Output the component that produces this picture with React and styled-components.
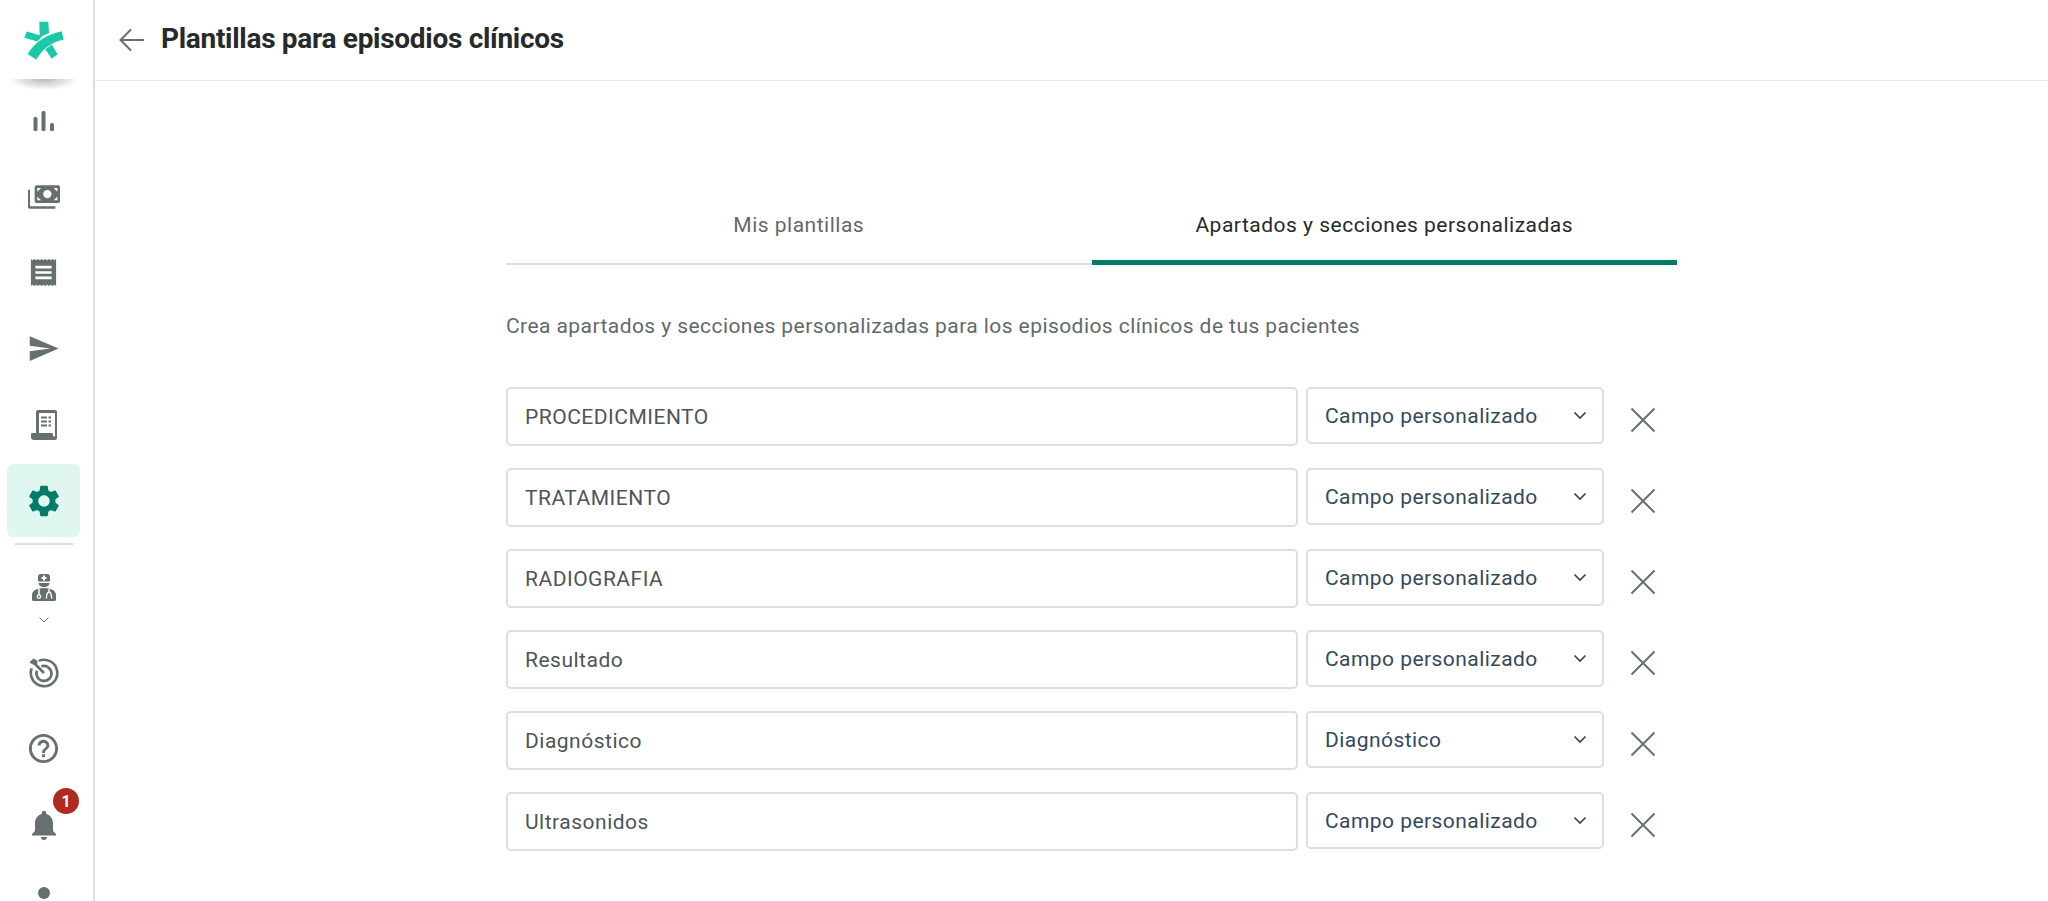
import styled, { createGlobalStyle } from 'styled-components';
import { MdSend, MdSettings, MdHelpOutline, MdNotifications } from 'react-icons/md';

const rows = [
  { name: 'PROCEDICMIENTO', type: 'Campo personalizado' },
  { name: 'TRATAMIENTO', type: 'Campo personalizado' },
  { name: 'RADIOGRAFIA', type: 'Campo personalizado' },
  { name: 'Resultado', type: 'Campo personalizado' },
  { name: 'Diagnóstico', type: 'Diagnóstico' },
  { name: 'Ultrasonidos', type: 'Campo personalizado' },
];

const Logo = () => (
  <svg width="40" height="39" viewBox="72 66 120 116" fill="#1cc8a8">
    <path d="M118 68h27l2 34c-10 3-18 7-25 12l-3-1z" />
    <path d="M73 116l7-19 42 12 1 7-11 11z" />
    <path d="M83 165C103 129 140 106 185 96l6 25C157 129 130 146 109 181z" />
    <path d="M136 150l19-14 18 29-18 14z" />
  </svg>
);

const ChartIcon = () => (
  <svg width="22" height="20" viewBox="0 0 22 20" fill="currentColor">
    <rect x="0.500" y="6" width="4" height="14" rx="1.500" />
    <rect x="8.500" y="0" width="4" height="20" rx="1.500" />
    <rect x="17" y="12" width="4" height="8" rx="1.500" />
  </svg>
);

const MoneyIcon = () => (
  <svg width="32" height="24" viewBox="0 0 96 70" fill="currentColor">
    <path
      fillRule="evenodd"
      d="M25 0h66a5 5 0 0 1 5 5v43a5 5 0 0 1-5 5H25a5 5 0 0 1-5-5V5a5 5 0 0 1 5-5zM28 8v11l11-11zM88 8H77l11 11zM28 45h11L28 34zM88 45V34L77 45zM58 14a12.500 12.500 0 1 0 0 25 12.500 12.500 0 0 0 0-25z"
    />
    <path d="M0 13h6v50h76v7H5a5 5 0 0 1-5-5z" />
  </svg>
);

const ReceiptIcon = () => (
  <svg width="27" height="29" viewBox="0 0 30 32">
    <path
      fill="currentColor"
      fillRule="evenodd"
      d="M1 1l2 1.500L5 1l2 1.500L9 1l2 1.500L13 1l2 1.500L17 1l2 1.500L21 1l2 1.500L25 1l2 1.500L29 1v30l-2-1.500-2 1.500-2-1.500-2 1.500-2-1.500-2 1.500-2-1.500-2 1.500-2-1.500-2 1.500-2-1.500-2 1.500-2-1.500-2 1.500zM6 8.500v3h18v-3zM6 14.500v3h18v-3zM6 20.500v3h18v-3z"
    />
  </svg>
);

const LedgerIcon = () => (
  <svg width="26" height="30" viewBox="0 0 26 30">
    <path
      fill="currentColor"
      fillRule="evenodd"
      d="M7 0h17a2 2 0 0 1 2 2v26a2 2 0 0 1-2 2H3a3 3 0 0 1-3-3v-3a1 1 0 0 1 1-1h4V2a2 2 0 0 1 2-2zM8 3v20h13.500l1 3.500H24V3zM10 6.500h6v2h-6zM17.500 6.500H20v2h-2.500zM10 10.500h6v2h-6zM17.500 10.500H20v2h-2.500zM10 14.500h6v2h-6zM17.500 14.500H20v2h-2.500z"
    />
  </svg>
);

const DoctorIcon = () => (
  <svg width="24" height="27" viewBox="0 0 24 27" fill="currentColor">
    <path
      fillRule="evenodd"
      d="M6 2.500A2.500 2.500 0 0 1 8.500 0h7A2.500 2.500 0 0 1 18 2.500v5H6zM11 1.500V3H9.500v2H11v1.500h2V5h1.500V3H13V1.500z"
    />
    <path d="M6.500 9h11c0 2.500-2.500 4-5.500 4s-5.500-1.500-5.500-4z" />
    <path d="M7 14.500c3-.8 7-.8 10 0 4 1 7 3 7 6.500v4.500a1.500 1.500 0 0 1-1.500 1.500h-21A1.500 1.500 0 0 1 0 25.500V21c0-3.500 3-5.500 7-6.500z" />
    <path d="M7 14.500v6.500" stroke="#fff" strokeWidth="1.500" fill="none" />
    <circle cx="7" cy="22.500" r="1.700" fill="none" stroke="#fff" strokeWidth="1.300" />
    <path d="M17 14.500v3.500c-1.800.5-2.600 3-2.600 6.500M17 18c1.800.5 2.600 3 2.600 6.500" stroke="#fff" strokeWidth="1.400" fill="none" />
  </svg>
);

const TargetIcon = () => (
  <svg width="30" height="30" viewBox="0 0 34 34" fill="none" stroke="currentColor" strokeWidth="3">
    <path d="M11 3.300a15 15 0 1 1-8 8.500" />
    <path d="M14 9.500a8.500 8.500 0 1 1-5 5" />
    <path d="M6 6l11 11" />
    <path d="M1 5l4-4 4 2v4H5z" fill="currentColor" strokeWidth="1" />
  </svg>
);

const GlobalStyle = createGlobalStyle`
  html, body {
    margin: 0;
    height: 100%;
    overflow: hidden;
    background: #ffffff;
  }
  body {
    font-family: Roboto, "Noto Sans", sans-serif;
  }
`;

const Page = styled.div`
  display: flex;
  width: 2048px;
  height: 901px;
  overflow: hidden;
`;

const Sidebar = styled.nav`
  flex: none;
  box-sizing: border-box;
  width: 95px;
  height: 901px;
  padding-left: 7px;
  border-right: 2px solid #dcdfdf;
  display: flex;
  flex-direction: column;
  align-items: flex-start;
  overflow: hidden;
  color: #667070;
`;

const LogoBox = styled.div`
  flex: none;
  position: relative;
  width: 73px;
  height: 80px;
  display: flex;
  align-items: center;
  justify-content: center;

  &::after {
    content: '';
    position: absolute;
    left: 2px;
    right: 2px;
    top: 79px;
    height: 11px;
    border-radius: 0 0 50% 50%;
    background: radial-gradient(ellipse at 50% 0, rgba(0, 0, 0, 0.28), rgba(0, 0, 0, 0) 72%);
  }
`;

const NavItem = styled.div`
  flex: none;
  width: 73px;
  height: 73px;
  margin-top: 3px;
  display: flex;
  align-items: center;
  justify-content: center;
  border-radius: 6px;
  color: ${({ $active }) => ($active ? '#007c69' : 'inherit')};
  background: ${({ $active }) => ($active ? '#dff7f0' : 'transparent')};
`;

const NavList = styled.div`
  display: flex;
  flex-direction: column;
  padding-top: 1px;
`;

const SideDivider = styled.div`
  flex: none;
  width: 58px;
  height: 2px;
  margin: 6px 0 0 8px;
  background: #dcdfdf;
`;

const UserSwitch = styled.div`
  flex: none;
  width: 73px;
  height: 59px;
  margin-top: 29px;
  display: flex;
  flex-direction: column;
  align-items: center;
  gap: 16px;
`;

const Bell = styled(NavItem)`
  position: relative;
`;

const Badge = styled.span`
  position: absolute;
  top: 0;
  left: 46px;
  width: 26px;
  height: 26px;
  border-radius: 50%;
  background: #b02a22;
  color: #ffffff;
  font-size: 16px;
  font-weight: 700;
  display: flex;
  align-items: center;
  justify-content: center;
`;

const Avatar = styled.div`
  flex: none;
  width: 12px;
  height: 12px;
  margin: 26px 0 0 31px;
  border-radius: 50%;
  background: #667070;
`;

const Main = styled.main`
  flex: 1;
  display: flex;
  flex-direction: column;
  min-width: 0;
`;

const Header = styled.header`
  flex: none;
  box-sizing: border-box;
  height: 81px;
  padding: 0 0 1px 24px;
  border-bottom: 1px solid #e8eaea;
  display: flex;
  align-items: center;
  gap: 16px;
`;

const Title = styled.h1`
  margin: 0 0 2px;
  font-size: 28px;
  font-weight: 700;
  letter-spacing: -0.3px;
  color: #262a2b;
`;

const Content = styled.section`
  width: 1171px;
  margin-left: 411px;
  padding-top: 114px;
`;

const Tabs = styled.div`
  display: flex;
  height: 70px;
`;

const Tab = styled.div`
  flex: 1;
  display: flex;
  justify-content: center;
  padding-top: 18px;
  font-size: 21px;
  letter-spacing: 0.5px;
  color: ${({ $active }) => ($active ? '#262a2b' : '#5f6a6a')};
  border-bottom: ${({ $active }) => ($active ? '5px solid #007c69' : '2px solid #dcdfdf')};
  box-sizing: border-box;
`;

const Intro = styled.p`
  margin: 48px 0 0;
  font-size: 21px;
  line-height: 26px;
  letter-spacing: 0.43px;
  color: #5f6a6a;
`;

const RowList = styled.div`
  display: flex;
  flex-direction: column;
  gap: 23px;
  margin-top: 48px;
`;

const Row = styled.div`
  display: flex;
  align-items: flex-start;
  height: 58px;
`;

const NameField = styled.div`
  flex: none;
  box-sizing: border-box;
  width: 792px;
  height: 59px;
  padding-left: 17px;
  display: flex;
  align-items: center;
  border: 2px solid #dcdfdf;
  border-radius: 5px;
  font-size: 21px;
  letter-spacing: 0.5px;
  color: #4c5656;
`;

const TypeField = styled.div`
  flex: none;
  box-sizing: border-box;
  width: 298px;
  height: 57px;
  margin-left: 8px;
  padding: 0 15px 0 17px;
  display: flex;
  align-items: center;
  justify-content: space-between;
  border: 2px solid #dcdfdf;
  border-radius: 5px;
  font-size: 21px;
  letter-spacing: 0.45px;
  color: #34495e;
`;

const RemoveButton = styled.div`
  flex: none;
  margin: 20px 0 0 26px;
  width: 26px;
  height: 26px;
  color: #667070;
`;

const App = () => (
  <>
    <GlobalStyle />
    <Page>
      <Sidebar>
        <LogoBox>
          <Logo />
        </LogoBox>
        <NavList>
          <NavItem>
            <ChartIcon />
          </NavItem>
          <NavItem>
            <MoneyIcon />
          </NavItem>
          <NavItem>
            <ReceiptIcon />
          </NavItem>
          <NavItem>
            <MdSend size={33} />
          </NavItem>
          <NavItem>
            <LedgerIcon />
          </NavItem>
          <NavItem $active>
            <MdSettings size={38} />
          </NavItem>
        </NavList>
        <SideDivider />
        <UserSwitch>
          <DoctorIcon />
          <svg width="10" height="6" viewBox="0 0 10 6" fill="none" stroke="currentColor" strokeWidth="1">
            <path d="M.500.500 5 5 9.500.500" />
          </svg>
        </UserSwitch>
        <NavItem>
          <TargetIcon />
        </NavItem>
        <NavItem>
          <MdHelpOutline size={35} />
        </NavItem>
        <Bell>
          <MdNotifications size={36} />
          <Badge>1</Badge>
        </Bell>
        <Avatar />
      </Sidebar>
      <Main>
        <Header>
          <svg width="26" height="24" viewBox="0 0 26 24" fill="none" stroke="#667070" strokeWidth="2">
            <path d="M25 12H2M12 1.500 1.500 12 12 22.500" />
          </svg>
          <Title>Plantillas para episodios clínicos</Title>
        </Header>
        <Content>
          <Tabs>
            <Tab>Mis plantillas</Tab>
            <Tab $active>Apartados y secciones personalizadas</Tab>
          </Tabs>
          <Intro>Crea apartados y secciones personalizadas para los episodios clínicos de tus pacientes</Intro>
          <RowList>
            {rows.map(row => (
              <Row key={row.name}>
                <NameField>{row.name}</NameField>
                <TypeField>
                  {row.type}
                  <svg width="14" height="9" viewBox="0 0 14 9" fill="none" stroke="#3b4646" strokeWidth="1.700">
                    <path d="M1.500 1.500l5.500 5.500 5.500-5.500" />
                  </svg>
                </TypeField>
                <RemoveButton>
                  <svg width="26" height="26" viewBox="0 0 26 26" fill="none" stroke="currentColor" strokeWidth="2">
                    <path d="M1.500 1.500l23 23M24.500 1.500l-23 23" />
                  </svg>
                </RemoveButton>
              </Row>
            ))}
          </RowList>
        </Content>
      </Main>
    </Page>
  </>
);

export default App;
